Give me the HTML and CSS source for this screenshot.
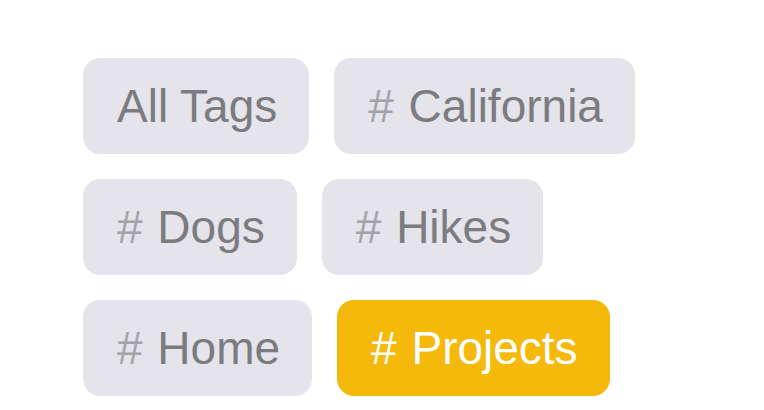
FILE: index.html
```html
<!DOCTYPE html>
<html lang="en">
  <head>
    <meta charset="UTF-8" />
    <meta name="viewport" content="width=device-width, initial-scale=1.0" />
    <title>Tags</title>
    <link rel="stylesheet" href="styles.css">
  </head>
  <body>
    <div class="tagList">
      <div class="tagRow">
        <span class="tag">All Tags</span>
        <span class="tag"><span class="hash">#</span> California</span>
      </div>
      <div class="tagRow">
        <span class="tag"><span class="hash">#</span> Dogs</span>
        <span class="tag"><span class="hash">#</span> Hikes</span>
      </div>
      <div class="tagRow">
        <span class="tag"><span class="hash">#</span> Home</span>
        <span class="tag selected"><span class="hash">#</span> Projects</span>
      </div>
    </div>
  </body>
</html>
```

FILE: styles.css
```css
body {
  margin: 0;
  padding: 0;
  background-color: #ffffff;
  font-family: "Liberation Sans", Arial, sans-serif;
}

.tagList {
  display: flex;
  flex-direction: column;
  gap: 25px;
  padding: 58px 0 0 83px;
}

.tagRow {
  display: flex;
  gap: 25px;
}

.tag {
  display: inline-flex;
  align-items: center;
  height: 96px;
  padding: 0 32px 0 34px;
  border-radius: 17px;
  background-color: #e4e4ea;
  color: #7b7b80;
  font-size: 46px;
  white-space: pre;
  box-sizing: border-box;
}

.hash {
  color: #a2a2a7;
  margin-right: 2px;
}

.selected {
  background-color: #f4b90b;
  color: #ffffff;
}

.selected .hash {
  color: #ffffff;
}
```
